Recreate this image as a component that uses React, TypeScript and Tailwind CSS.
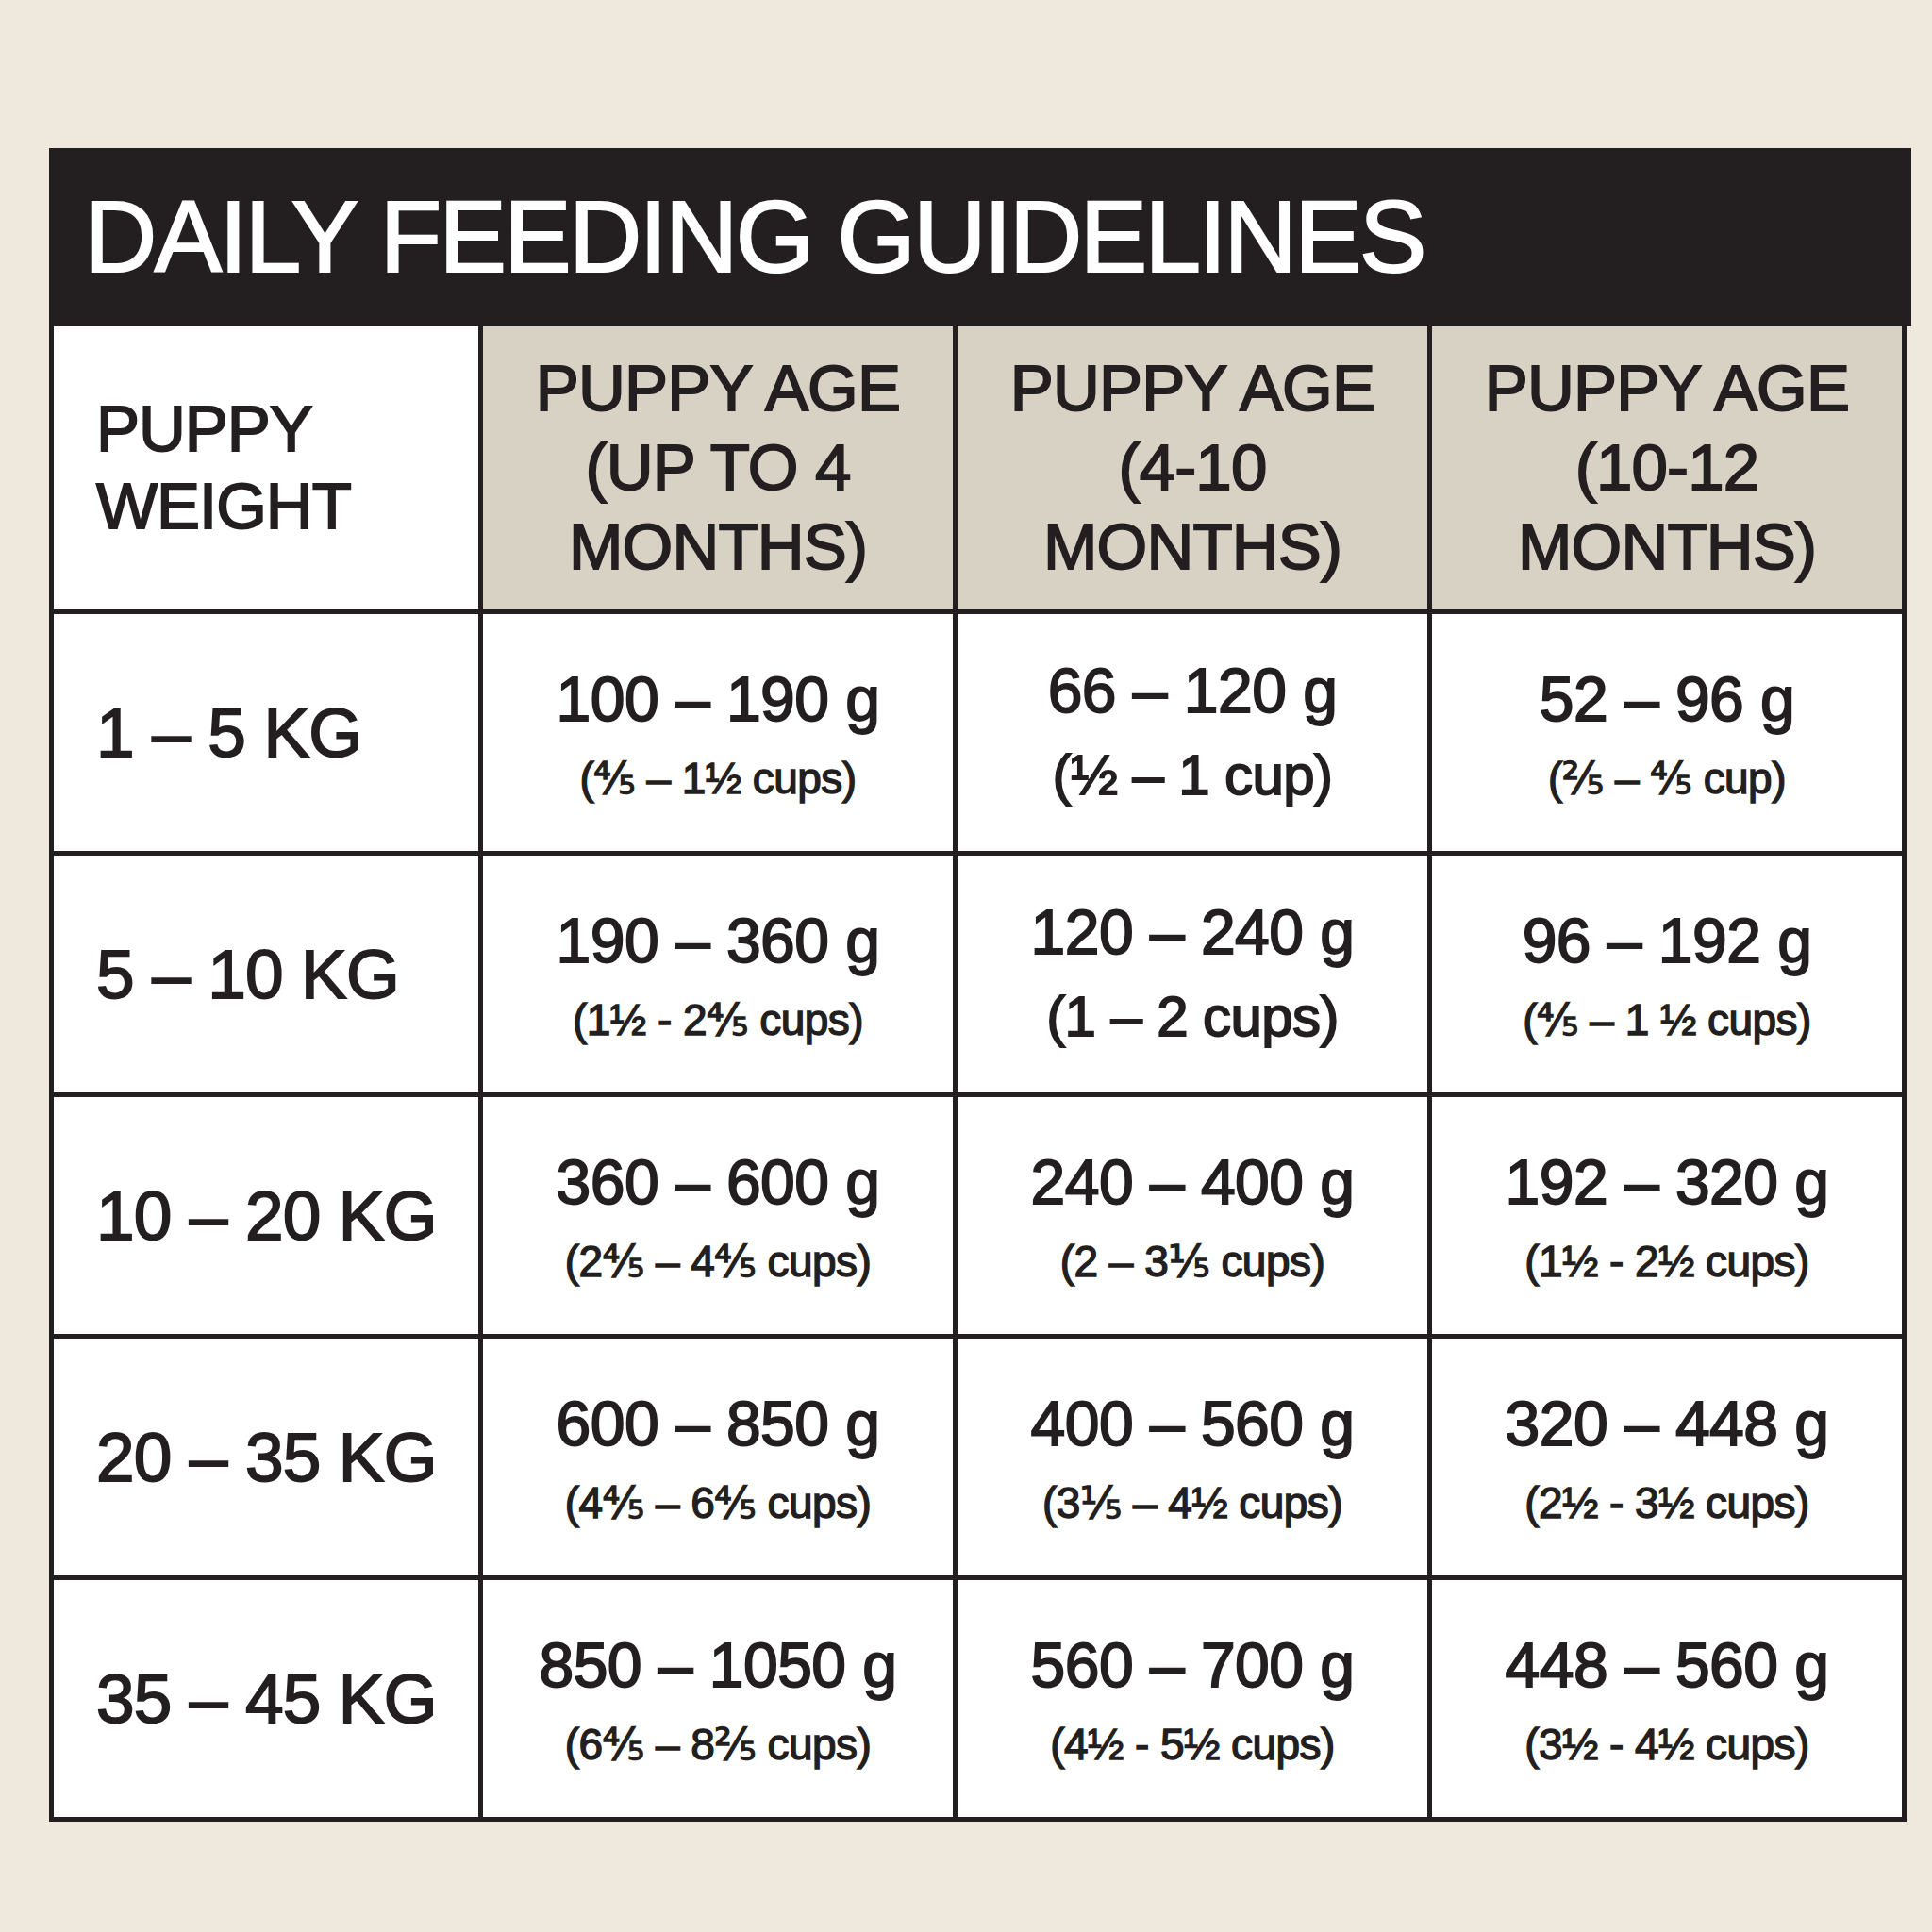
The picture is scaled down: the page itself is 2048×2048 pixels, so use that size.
const rows = [
  {
    weight: '1 – 5 KG',
    cells: [
      { grams: '100 – 190 g', cups: '(⅘ – 1½ cups)' },
      { grams: '66 – 120 g', cups: '(½ – 1 cup)', large: true },
      { grams: '52 – 96 g', cups: '(⅖ – ⅘ cup)' },
    ],
  },
  {
    weight: '5 – 10 KG',
    cells: [
      { grams: '190 – 360 g', cups: '(1½ - 2⅘ cups)' },
      { grams: '120 – 240 g', cups: '(1 – 2 cups)', large: true },
      { grams: '96 – 192 g', cups: '(⅘ – 1 ½ cups)' },
    ],
  },
  {
    weight: '10 – 20 KG',
    cells: [
      { grams: '360 – 600 g', cups: '(2⅘ – 4⅘ cups)' },
      { grams: '240 – 400 g', cups: '(2 – 3⅕ cups)' },
      { grams: '192 – 320 g', cups: '(1½ - 2½ cups)' },
    ],
  },
  {
    weight: '20 – 35 KG',
    cells: [
      { grams: '600 – 850 g', cups: '(4⅘ – 6⅘ cups)' },
      { grams: '400 – 560 g', cups: '(3⅕ – 4½ cups)' },
      { grams: '320 – 448 g', cups: '(2½ - 3½ cups)' },
    ],
  },
  {
    weight: '35 – 45 KG',
    cells: [
      { grams: '850 – 1050 g', cups: '(6⅘ – 8⅖ cups)' },
      { grams: '560 – 700 g', cups: '(4½ - 5½ cups)' },
      { grams: '448 – 560 g', cups: '(3½ - 4½ cups)' },
    ],
  },
];

const ageHeaders = [
  ['PUPPY AGE', '(UP TO 4', 'MONTHS)'],
  ['PUPPY AGE', '(4-10', 'MONTHS)'],
  ['PUPPY AGE', '(10-12', 'MONTHS)'],
];

type Cell = { grams: string; cups: string; large?: boolean };

function AmountCell({ cell }: { cell: Cell }) {
  return (
    <div className="flex flex-col items-center justify-center bg-white">
      <div className="text-[66px] leading-[80px] tracking-[-0.008em]">{cell.grams}</div>
      {cell.large ? (
        <div className="mt-[10px] text-[60px] leading-[80px] tracking-[-0.01em]">{cell.cups}</div>
      ) : (
        <div className="mt-[16px] text-[46px] leading-[56px] tracking-[-0.012em] [-webkit-text-stroke:1.4px_#231f20]">
          {cell.cups}
        </div>
      )}
    </div>
  );
}

export default function App() {
  return (
    <div
      className="min-h-[2048px] w-[2048px] bg-[#efe8dc] pt-[157px] pl-[52px] text-[#231f20] [-webkit-text-stroke:1.8px_#231f20]"
      style={{ fontFamily: '"Liberation Sans", Arial, "DejaVu Sans", sans-serif' }}
    >
      <div className="w-[1969px] bg-[#231f20]">
        {/* Titel */}
        <div className="mr-[-5px] flex h-[189px] items-center bg-[#231f20] pl-[37px]">
          <h1 className="text-[107px] leading-none tracking-[-0.024em] text-white [-webkit-text-stroke:2px_#ffffff]">
            DAILY FEEDING GUIDELINES
          </h1>
        </div>

        <div className="grid grid-cols-[450px_498px_498px_498px] grid-rows-[300px_repeat(5,251px)] gap-[5px] px-[5px] pb-[5px]">
          <div className="flex flex-col justify-center bg-white pl-[45px] text-[69px] leading-[82px] tracking-[-0.015em]">
            <span>PUPPY</span>
            <span>WEIGHT</span>
          </div>
          {ageHeaders.map((lines, i) => (
            <div
              key={i}
              className="flex flex-col items-center justify-center bg-[#d8d2c4] text-[69px] leading-[84px] tracking-[-0.012em]"
            >
              {lines.map((line) => (
                <span key={line}>{line}</span>
              ))}
            </div>
          ))}

          {rows.map((row) => (
            <>
              <div key={row.weight} className="flex items-center bg-white pl-[45px] text-[73px] leading-none tracking-[-0.012em]">
                {row.weight}
              </div>
              {row.cells.map((cell, j) => (
                <AmountCell key={row.weight + j} cell={cell} />
              ))}
            </>
          ))}
        </div>
      </div>
    </div>
  );
}
